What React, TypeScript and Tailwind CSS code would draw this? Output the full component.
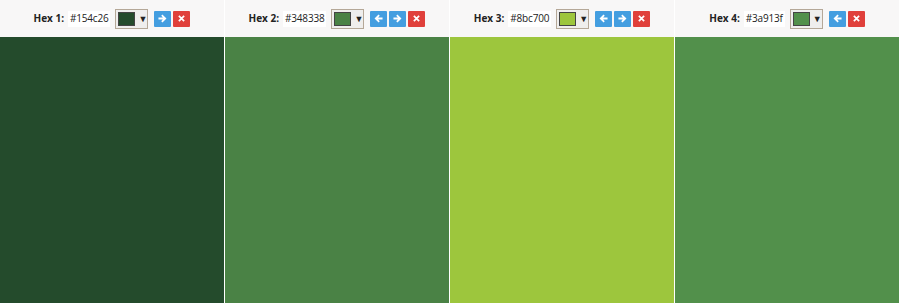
import * as React from 'react';

interface Swatch {
  hex: string;
  shown: string;
}

const swatches: Swatch[] = [
  { hex: '#154c26', shown: '#244b2c' },
  { hex: '#348338', shown: '#4a8245' },
  { hex: '#8bc700', shown: '#9dc63d' },
  { hex: '#3a913f', shown: '#52904b' },
];

function ArrowIcon({ dir }: { dir: 'left' | 'right' }) {
  return (
    <svg width="9" height="9" viewBox="0 0 10 10" className={dir === 'left' ? 'rotate-180' : ''}>
      <path d="M1.5 5h6M5 2l3 3-3 3" stroke="white" strokeWidth="2" fill="none" strokeLinecap="square" />
    </svg>
  );
}

function CloseIcon() {
  return (
    <svg width="7" height="7" viewBox="0 0 8 8">
      <path d="M1 1l6 6M7 1l-6 6" stroke="white" strokeWidth="2" />
    </svg>
  );
}

export default function App() {
  return (
    <div className="flex w-[900px] h-[303px] font-['Open_Sans',sans-serif] text-[10px] text-[#222]">
      {swatches.map((s, i) => (
        <div key={s.hex} className="flex flex-col w-[225px] border-r border-white">
          {/* Header */}
          <div className="flex h-[37px] items-center justify-center bg-[#f8f7f7]">
            <span className="font-bold mr-[4px]">Hex {i + 1}:</span>
            <span className="flex h-[16px] items-center bg-white px-[2px] mr-[5px] tracking-[-0.2px]">{s.hex}</span>
            <div className="flex h-[20px] w-[33px] items-center border border-[#b5a898] bg-[#efeeed] pl-[2px] mr-[6px]">
              <div className="h-[14px] w-[17px] border border-[#444]" style={{ backgroundColor: s.shown }} />
              <span className="ml-[3px] text-[9px] leading-none text-[#222]">▼</span>
            </div>
            <div className="flex gap-[2px]">
              {i > 0 && (
                <button className="flex h-[16px] w-[17px] items-center justify-center rounded-[1px] bg-[#449ee0]">
                  <ArrowIcon dir="left" />
                </button>
              )}
              {i < swatches.length - 1 && (
                <button className="flex h-[16px] w-[17px] items-center justify-center rounded-[1px] bg-[#449ee0]">
                  <ArrowIcon dir="right" />
                </button>
              )}
              <button className="flex h-[16px] w-[17px] items-center justify-center rounded-[1px] bg-[#e0403b]">
                <CloseIcon />
              </button>
            </div>
          </div>
          {/* Colour */}
          <div className="flex-1" style={{ backgroundColor: s.shown }} />
        </div>
      ))}
    </div>
  );
}
